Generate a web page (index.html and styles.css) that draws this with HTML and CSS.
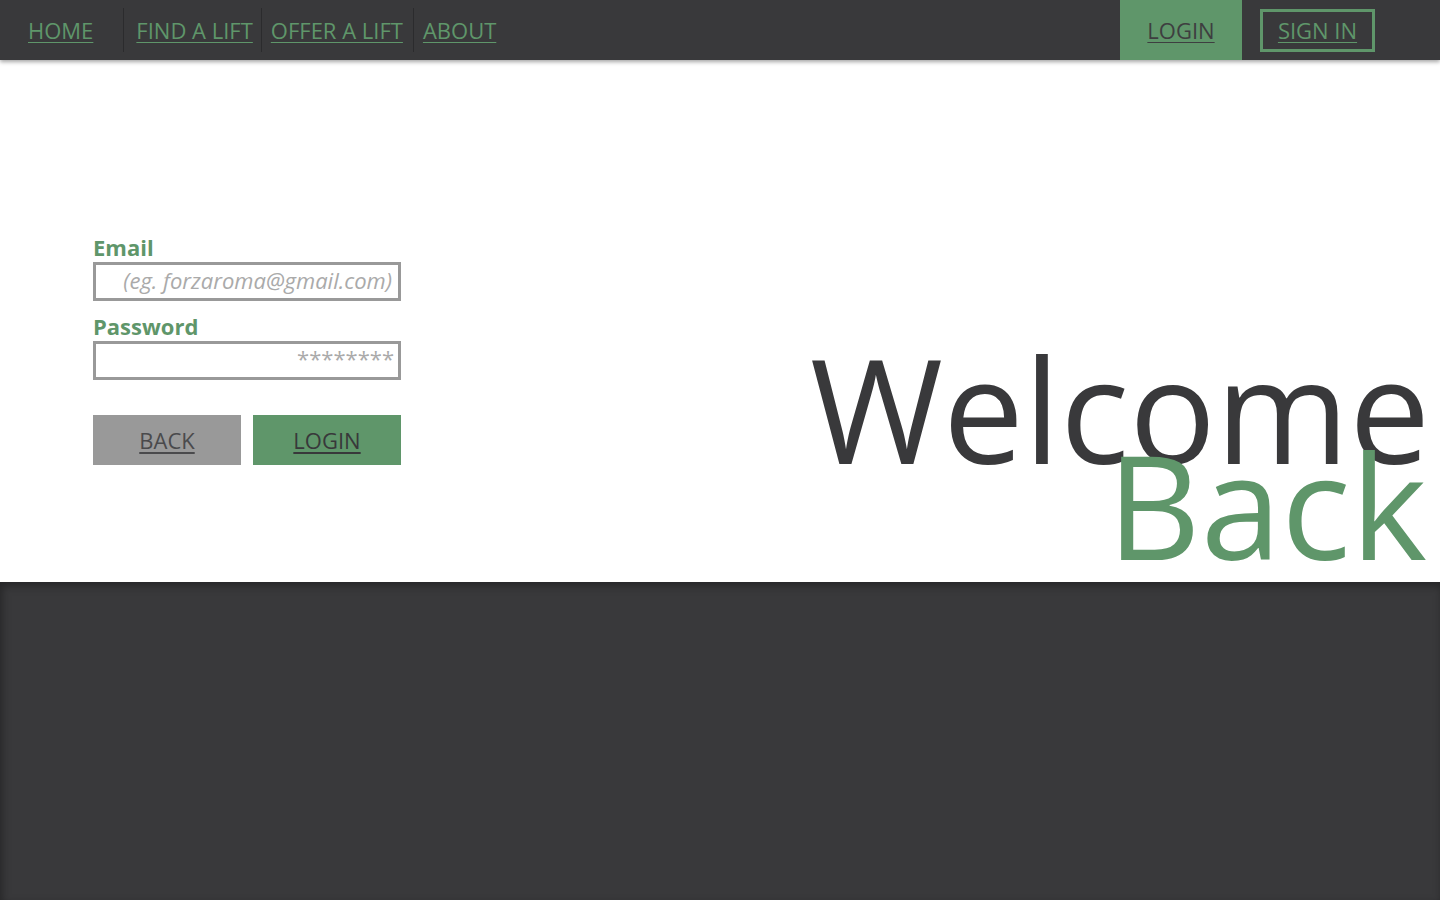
FILE: index.html
```html
<!DOCTYPE html>
<html lang="en">
<head>
<meta charset="utf-8">
<title>Login</title>
<link rel="stylesheet" href="styles.css">
</head>
<body>
<header class="topbar">
  <nav class="nav-left">
    <a class="nav-item nav-home" href="#">HOME</a>
    <a class="nav-item nav-find" href="#">FIND A LIFT</a>
    <a class="nav-item nav-offer" href="#">OFFER A LIFT</a>
    <a class="nav-item nav-about" href="#">ABOUT</a>
  </nav>
  <div class="nav-right">
    <a class="nav-login" href="#">LOGIN</a>
    <a class="nav-signin" href="#">SIGN IN</a>
  </div>
</header>
<main class="main">
  <form class="login-form">
    <label class="field-label" for="email">Email</label>
    <input class="field-input field-input-email" id="email" type="text" placeholder="(eg. forzaroma@gmail.com)">
    <label class="field-label field-label-pw" for="pw">Password</label>
    <input class="field-input field-input-pw" id="pw" type="password" placeholder="********">
    <div class="buttons">
      <a class="btn btn-back" href="#">BACK</a>
      <a class="btn btn-login" href="#">LOGIN</a>
    </div>
  </form>
  <h1 class="welcome">
    <span class="welcome-line">Welcome</span>
    <span class="welcome-line back">Back</span>
  </h1>
</main>
<footer class="footer"></footer>
</body>
</html>
```

FILE: styles.css
```css
* { box-sizing: border-box; }
html, body { margin: 0; padding: 0; }
body {
  font-family: "Open Sans", "DejaVu Sans", sans-serif;
  background: #ffffff;
  width: 1440px;
  height: 900px;
  overflow: hidden;
  display: flex;
  flex-direction: column;
}

.topbar {
  height: 60px;
  background: #39393b;
  display: flex;
  justify-content: space-between;
  align-items: stretch;
  box-shadow: 0 2px 4px rgba(0, 0, 0, 0.35);
  position: relative;
  z-index: 2;
}
.nav-left {
  display: flex;
  align-items: center;
  padding-left: 28px;
}
.nav-item {
  color: #5f966a;
  font-size: 22px;
  line-height: 44px;
  text-decoration: underline;
  text-underline-offset: 3px;
  text-decoration-thickness: 1px;
}
.nav-home { padding-right: 30px; border-right: 1px solid #2b2b2d; }
.nav-find { padding: 0 8px 0 12px; border-right: 1px solid #2b2b2d; }
.nav-offer { padding: 0 10px 0 9px; border-right: 1px solid #2b2b2d; }
.nav-about { padding: 0 0 0 9px; }

.nav-right {
  display: flex;
  align-items: center;
  padding-right: 65px;
}
.nav-login {
  height: 60px;
  width: 122px;
  background: #5f966a;
  color: #3e3e40;
  font-size: 22px;
  display: flex;
  align-items: center;
  justify-content: center;
  text-decoration: underline;
  text-underline-offset: 3px;
  text-decoration-thickness: 1px;
  margin-right: 18px;
}
.nav-signin {
  height: 43px;
  width: 115px;
  border: 3px solid #5f966a;
  color: #5f966a;
  font-size: 22px;
  display: flex;
  align-items: center;
  justify-content: center;
  text-decoration: underline;
  text-underline-offset: 3px;
  text-decoration-thickness: 1px;
}

.main {
  height: 522px;
  display: flex;
  justify-content: space-between;
  align-items: flex-start;
  padding: 173px 10px 0 93px;
}
.login-form {
  width: 308px;
  display: flex;
  flex-direction: column;
}
.field-label {
  color: #5f966a;
  font-weight: 700;
  font-size: 22px;
  line-height: 29px;
}
.field-label-pw { margin-top: 11px; }
.field-input {
  width: 308px;
  height: 39px;
  border: 3px solid #999999;
  padding: 0 6px;
  text-align: right;
  font-family: "Open Sans", sans-serif;
  font-size: 22px;
  color: #333;
  outline: none;
  background: #fff;
}
.field-input::placeholder {
  color: #aaaaaa;
  font-style: italic;
}
.field-input-email { padding: 0 6px 4px 6px; }
.field-input-pw { padding: 0 4px 6px 6px; }
.field-input-pw::placeholder {
  font-style: normal;
}
.buttons {
  display: flex;
  gap: 12px;
  margin-top: 35px;
}
.btn {
  width: 148px;
  height: 50px;
  display: flex;
  align-items: center;
  justify-content: center;
  font-size: 22px;
  font-weight: 500;
  color: #404042;
  text-decoration: underline;
  text-underline-offset: 3px;
  text-decoration-thickness: 2px;
}
.btn-back { background: #999999; color: #4a4a4c; }
.btn-login { background: #5f966a; color: #38383a; }

.welcome {
  margin: 128px 0 0 0;
  font-weight: 400;
  font-size: 145px;
  line-height: 95px;
  text-align: right;
  color: #39393b;
  display: flex;
  flex-direction: column;
  align-items: flex-end;
}
.welcome-line { display: block; }
.welcome-line:first-child { font-size: 144px; }
.back { color: #5f966a; position: relative; right: 3px; }

.footer {
  flex: 1;
  background: #39393b;
  box-shadow: inset 2px 4px 8px rgba(0, 0, 0, 0.35);
}
```
